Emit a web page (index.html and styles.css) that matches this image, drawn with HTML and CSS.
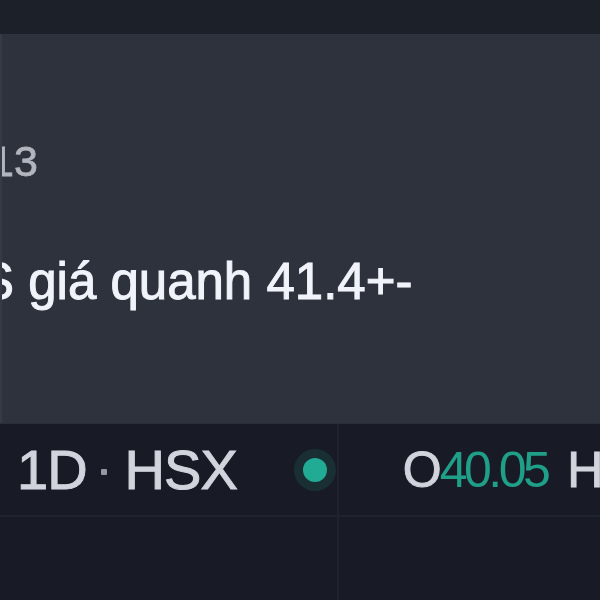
FILE: index.html
```html
<!DOCTYPE html>
<html lang="vi">

<head>
    <meta charset="UTF-8">
    <meta name="viewport" content="width=device-width, initial-scale=1.0">
    <title>Chart idea</title>
    <link rel="stylesheet" href="styles.css">
</head>

<body>
    <!-- Top toolbar -->
    <div class="topbar"></div>

    <!-- Idea / comment panel -->
    <div class="panel">
        <div class="time">13</div>
        <div class="message">S giá quanh 41.4+-</div>
    </div>

    <!-- Chart area with legend -->
    <div class="chart">
        <div class="grid-v"></div>
        <div class="grid-h"></div>
        <div class="legend">
            <span class="symbol">1D<span class="sep"></span>HSX</span>
            <span class="status-dot"></span>
            <span class="ohlc">
                <span class="label">O</span><span class="up">40.05</span>
                <span class="label">H</span>
            </span>
        </div>
    </div>
</body>

</html>
```

FILE: styles.css
```css
/* Base page */
body {
    margin: 0;
    background-color: #181b25;
    font-family: "Liberation Sans", Arial, sans-serif;
    overflow: hidden;
    height: 600px;
}

/* Top toolbar strip */
.topbar {
    height: 34px;
    background-color: #1c2029;
}

/* Comment panel */
.panel {
    height: 389px;
    background-color: #2e323d;
    border-left: 2px solid #353a45;
    box-sizing: border-box;
    padding-top: 106px;
    overflow: hidden;
}

.time {
    font-size: 43px;
    line-height: 1;
    color: #b2b5be;
    margin-left: -12px;
    white-space: nowrap;
    -webkit-text-stroke: 0.8px #b2b5be;
    filter: blur(0.5px);
}

.message {
    margin-top: 73px;
    font-size: 51px;
    line-height: 1;
    color: #f0f3fa;
    margin-left: -22px;
    white-space: nowrap;
    -webkit-text-stroke: 1px #f0f3fa;
    filter: blur(0.5px);
}

/* Chart area */
.chart {
    position: relative;
    height: 177px;
    border-top: 1px solid #2a2e39;
    overflow: hidden;
}

.grid-v {
    position: absolute;
    left: 337px;
    top: 0;
    bottom: 0;
    width: 2px;
    background-color: #1f232d;
}

.grid-h {
    position: absolute;
    left: 0;
    right: 0;
    top: 91px;
    height: 2px;
    background-color: #1f232d;
}

/* Legend row */
.legend {
    position: relative;
    display: flex;
    align-items: center;
    height: 91px;
    padding-left: 17px;
    white-space: nowrap;
    filter: blur(0.5px);
}

.symbol {
    display: flex;
    align-items: center;
    font-size: 56px;
    color: #d1d4dc;
    letter-spacing: -1px;
    -webkit-text-stroke: 1px #d1d4dc;
}

.sep {
    width: 6px;
    height: 6px;
    border-radius: 1px;
    background-color: #9598a1;
    margin: 4px 18px 0 14px;
}

.status-dot {
    width: 24px;
    height: 24px;
    border-radius: 50%;
    background-color: #22ab94;
    box-shadow: 0 0 0 9px rgba(34, 171, 148, 0.14);
    margin-left: 66px;
    flex-shrink: 0;
}

.ohlc {
    font-size: 50px;
    margin-left: 76px;
    letter-spacing: -2px;
}

.label {
    color: #d1d4dc;
    -webkit-text-stroke: 1px #d1d4dc;
}

.up {
    color: #1f9e88;
    letter-spacing: -3.5px;
    margin-right: 8px;
}
```
